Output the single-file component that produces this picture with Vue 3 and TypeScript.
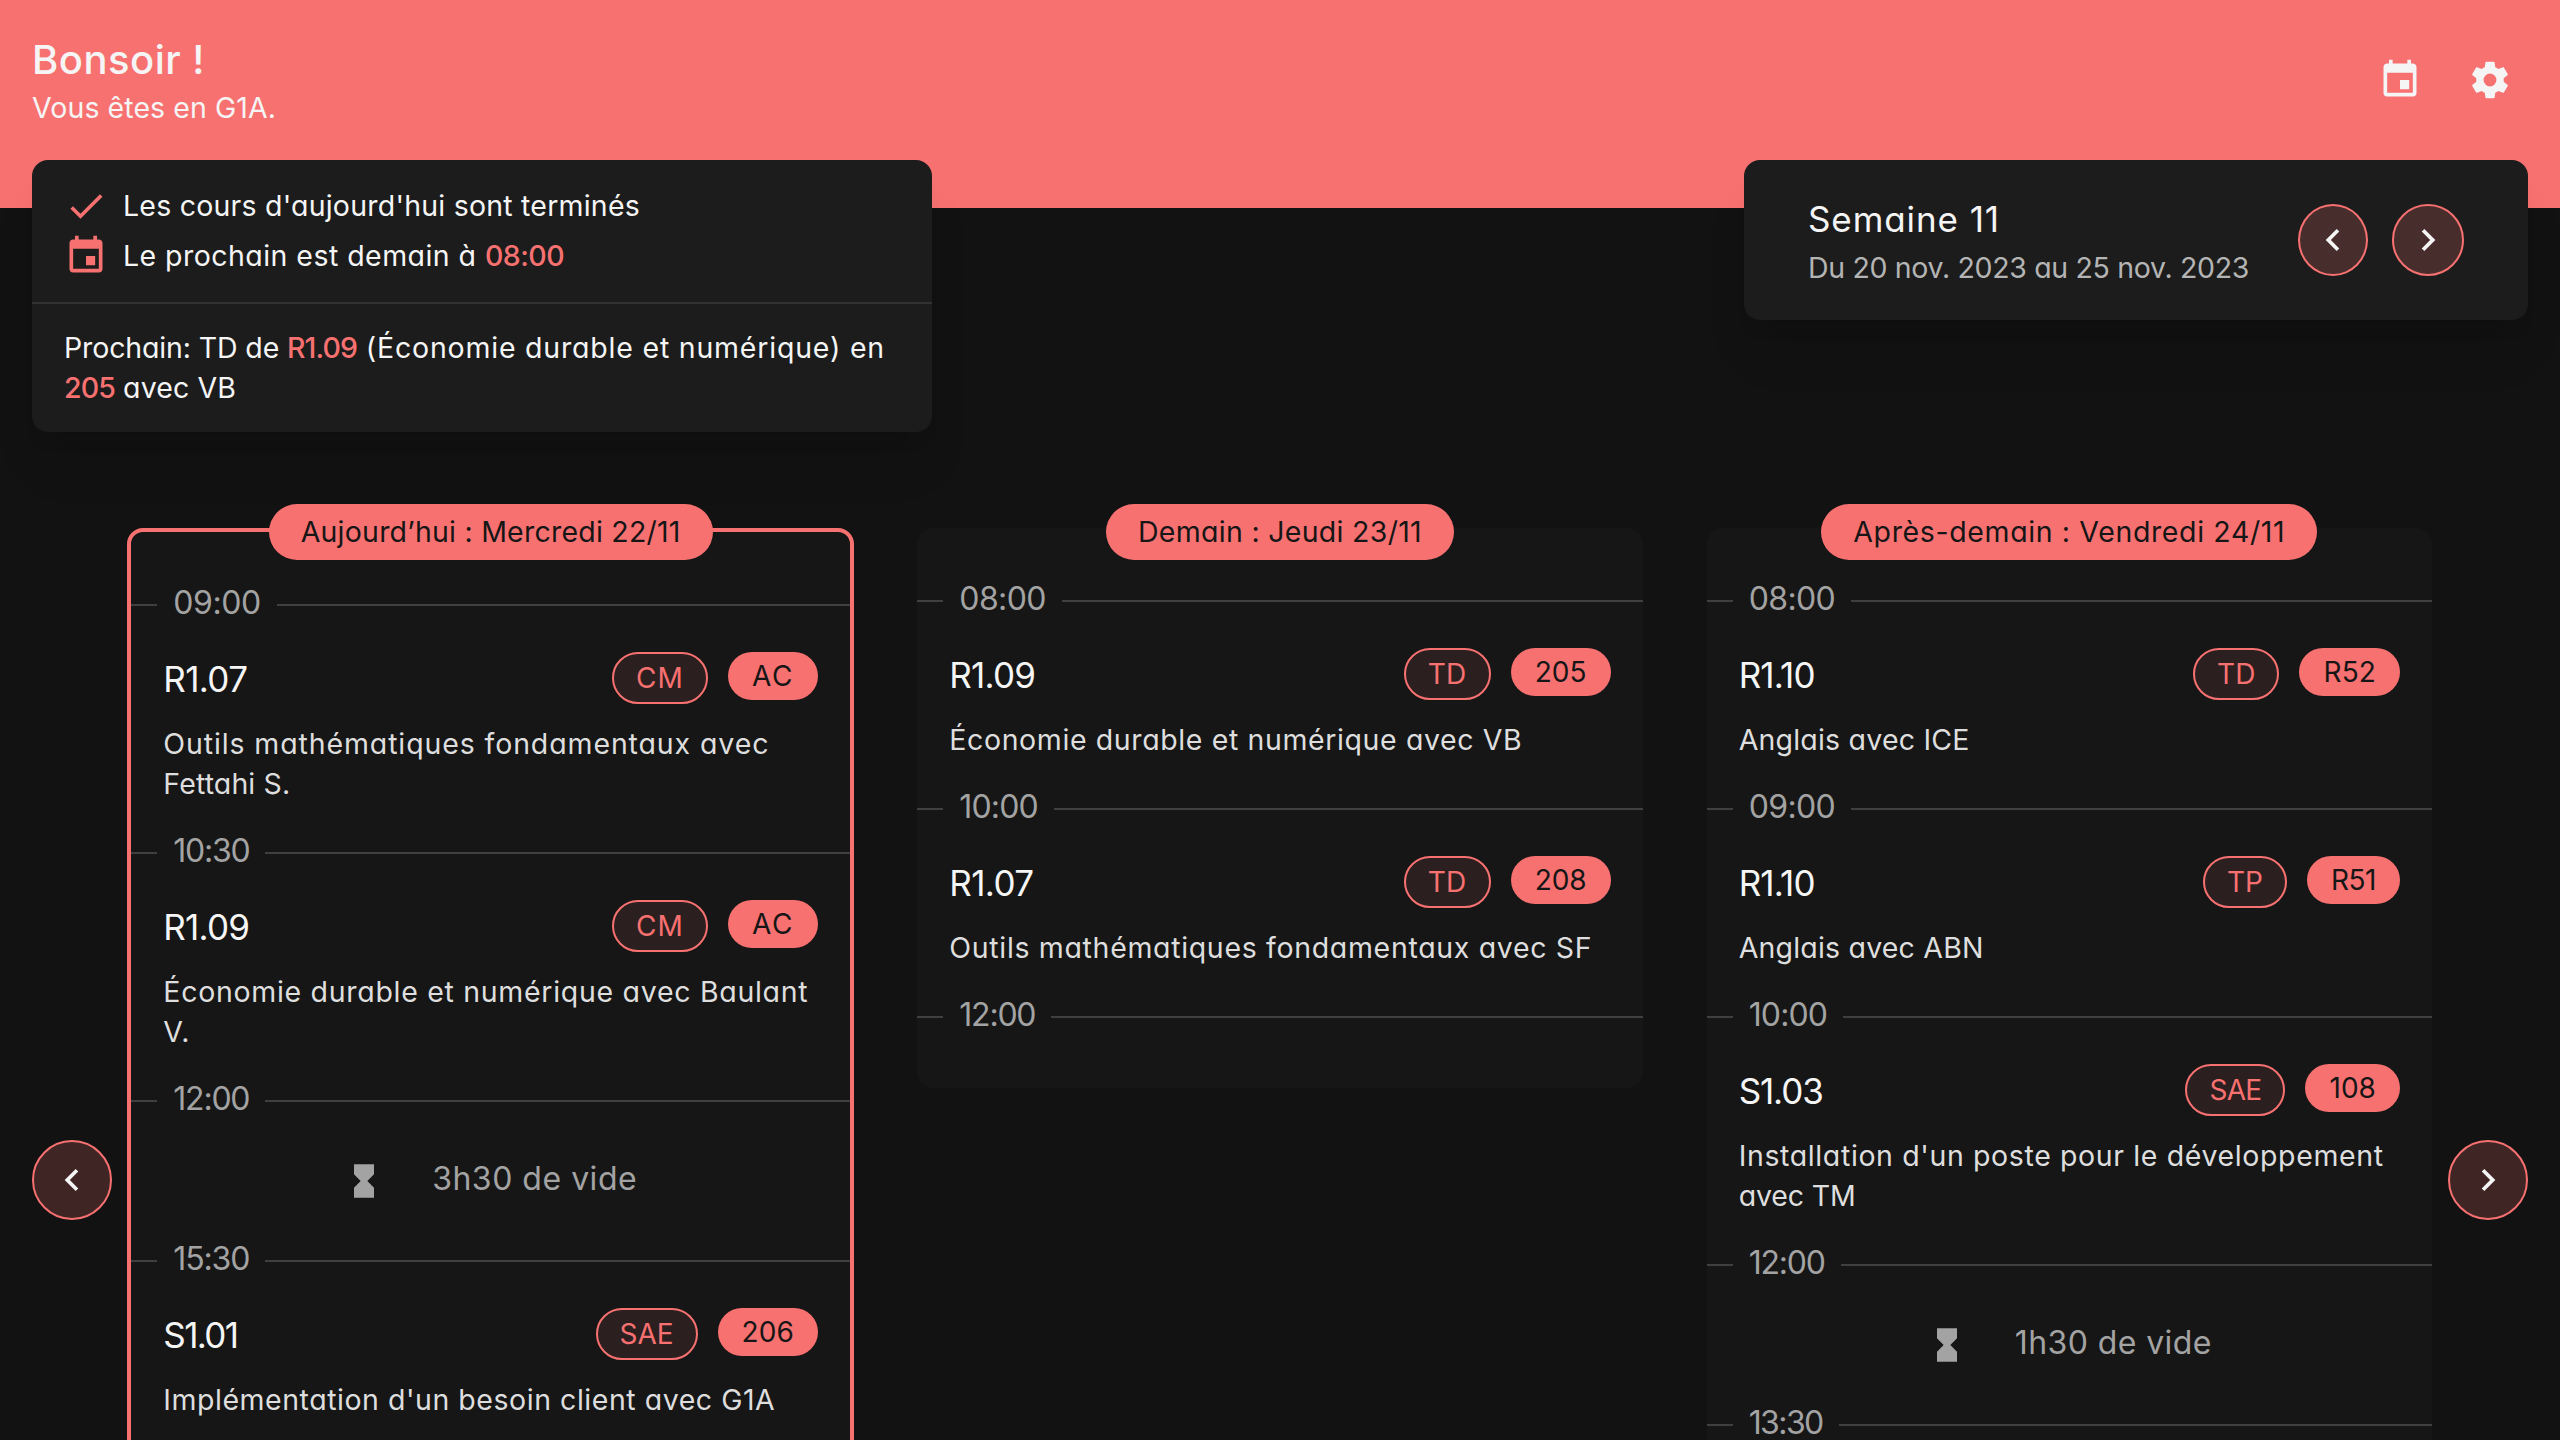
<script setup lang="ts">
import type { Directive } from 'vue'

interface Label {
  text: string
  width: number
}
interface Course {
  kind: 'course'
  code: Label
  type: Label
  room: Label
  lines: Label[]
}
interface Time {
  kind: 'time'
  label: Label
}
interface Pause {
  kind: 'pause'
  label: Label
}
interface Day {
  title: Label
  today: boolean
  items: (Course | Time | Pause)[]
}

const l = (text: string, width: number): Label => ({ text, width })
const time = (text: string, width: number): Time => ({ kind: 'time', label: l(text, width) })
const pause = (text: string, width: number): Pause => ({ kind: 'pause', label: l(text, width) })
const course = (code: Label, type: Label, room: Label, ...lines: Label[]): Course => ({
  kind: 'course', code, type, room, lines,
})

// Tracks a label out (or in) so that it occupies the requested width.
const vTrack: Directive<HTMLElement, number> = {
  mounted(el, { value }) {
    const natural = el.getBoundingClientRect().width
    const count = (el.textContent ?? '').length
    if (count > 0) el.style.letterSpacing = `${(value - natural) / count}px`
  },
}

const days: Day[] = [
  {
    title: l('Aujourd’hui : Mercredi 22/11', 380),
    today: true,
    items: [
      time('09:00', 87.5),
      course(l('R1.07', 84), l('CM', 48), l('AC', 42),
        l('Outils mathématiques fondamentaux avec', 606), l('Fettahi S.', 127)),
      time('10:30', 76),
      course(l('R1.09', 86), l('CM', 48), l('AC', 42),
        l('Économie durable et numérique avec Baulant', 645), l('V.', 27)),
      time('12:00', 76),
      pause('3h30 de vide', 205),
      time('15:30', 76),
      course(l('S1.01', 74), l('SAE', 54), l('206', 52.5),
        l("Implémentation d'un besoin client avec G1A", 612)),
    ],
  },
  {
    title: l('Demain : Jeudi 23/11', 284),
    today: false,
    items: [
      time('08:00', 86.5),
      course(l('R1.09', 86), l('TD', 39), l('205', 52),
        l('Économie durable et numérique avec VB', 573)),
      time('10:00', 78.5),
      course(l('R1.07', 84), l('TD', 39), l('208', 52),
        l('Outils mathématiques fondamentaux avec SF', 643)),
      time('12:00', 76),
    ],
  },
  {
    title: l('Après-demain : Vendredi 24/11', 432),
    today: false,
    items: [
      time('08:00', 86.5),
      course(l('R1.10', 76), l('TD', 38.5), l('R52', 52.5), l('Anglais avec ICE', 231)),
      time('09:00', 86.5),
      course(l('R1.10', 76), l('TP', 36), l('R51', 45), l('Anglais avec ABN', 245)),
      time('10:00', 78.5),
      course(l('S1.03', 84), l('SAE', 52), l('108', 46.5),
        l("Installation d'un poste pour le développement", 645), l('avec TM', 117)),
      time('12:00', 76),
      pause('1h30 de vide', 197),
      time('13:30', 74),
    ],
  },
]

const calendarPath =
  'M19,19H5V8H19M16,1V3H8V1H6V3H5C3.89,3 3,3.89 3,5V19A2,2 0 0,0 5,21H19A2,2 0 0,0 21,19V5C21,3.89 20.1,3 19,3H18V1M17,12H12V17H17V12Z'
const gearPath =
  'M12,15.5A3.5,3.5 0 0,1 8.5,12A3.5,3.5 0 0,1 12,8.5A3.5,3.5 0 0,1 15.5,12A3.5,3.5 0 0,1 12,15.5M19.43,12.97C19.47,12.65 19.5,12.33 19.5,12C19.5,11.67 19.47,11.34 19.43,11L21.54,9.37C21.73,9.22 21.78,8.95 21.66,8.73L19.66,5.27C19.54,5.05 19.27,4.96 19.05,5.05L16.56,6.05C16.04,5.66 15.5,5.32 14.87,5.07L14.5,2.42C14.46,2.18 14.25,2 14,2H10C9.75,2 9.54,2.18 9.5,2.42L9.13,5.07C8.5,5.32 7.96,5.66 7.44,6.05L4.95,5.05C4.73,4.96 4.46,5.05 4.34,5.27L2.34,8.73C2.21,8.95 2.27,9.22 2.46,9.37L4.57,11C4.53,11.34 4.5,11.67 4.5,12C4.5,12.33 4.53,12.65 4.57,12.97L2.46,14.63C2.27,14.78 2.21,15.05 2.34,15.27L4.34,18.73C4.46,18.95 4.73,19.03 4.95,18.95L7.44,17.94C7.96,18.34 8.5,18.68 9.13,18.93L9.5,21.58C9.54,21.82 9.75,22 10,22H14C14.25,22 14.46,21.82 14.5,21.58L14.87,18.93C15.5,18.67 16.04,18.34 16.56,17.94L19.05,18.95C19.27,19.03 19.54,18.95 19.66,18.73L21.66,15.27C21.78,15.05 21.73,14.78 21.54,14.63L19.43,12.97Z'
const checkPath = 'M21,7L9,19L3.5,13.5L4.91,12.09L9,16.17L19.59,5.59L21,7Z'
const leftPath = 'M15.41,16.58L10.83,12L15.41,7.41L14,6L8,12L14,18L15.41,16.58Z'
const rightPath = 'M8.59,16.58L13.17,12L8.59,7.41L10,6L16,12L10,18L8.59,16.58Z'
const hourglassPath = 'M6,2V8H6L10,12L6,16H6V22H18V16H18L14,12L18,8H18V2H6Z'
</script>

<template>
  <div class="page">
    <header class="header">
      <div>
        <h1 class="hello"><span v-track="173">Bonsoir !</span></h1>
        <p class="group"><span v-track="244">Vous êtes en G1A.</span></p>
      </div>
      <nav class="actions">
        <svg class="icon" viewBox="0 0 24 24"><path :d="calendarPath" /></svg>
        <svg class="icon" viewBox="0 0 24 24"><path :d="gearPath" /></svg>
      </nav>
    </header>

    <section class="cards">
      <article class="card status">
        <div class="summary">
          <div class="fact">
            <svg class="icon accent" viewBox="0 0 24 24"><path :d="checkPath" /></svg>
            <p><span v-track="517">Les cours d'aujourd'hui sont terminés</span></p>
          </div>
          <div class="fact">
            <svg class="icon accent" viewBox="0 0 24 24"><path :d="calendarPath" /></svg>
            <p><span v-track="362">Le prochain est demain à </span><span v-track="79" class="accent strong">08:00</span></p>
          </div>
        </div>
        <div class="next">
          <p><span v-track="223">Prochain: TD de </span><span v-track="70" class="accent strong">R1.09</span><span v-track="528"> (Économie durable et numérique) en</span></p>
          <p><span v-track="51" class="accent strong">205</span><span v-track="121"> avec VB</span></p>
        </div>
      </article>

      <article class="card week">
        <div class="week-text">
          <h2><span v-track="192">Semaine 11</span></h2>
          <p><span v-track="441">Du 20 nov. 2023 au 25 nov. 2023</span></p>
        </div>
        <div class="week-nav">
          <button class="round narrow"><svg viewBox="0 0 24 24"><path :d="leftPath" /></svg></button>
          <button class="round"><svg viewBox="0 0 24 24"><path :d="rightPath" /></svg></button>
        </div>
      </article>
    </section>

    <main class="timetable">
      <button class="round large"><svg viewBox="0 0 24 24"><path :d="leftPath" /></svg></button>
      <div class="days">
        <section v-for="day in days" :key="day.title.text" class="day">
          <h3 class="day-title"><span v-track="day.title.width">{{ day.title.text }}</span></h3>
          <div class="panel" :class="{ today: day.today }">
            <template v-for="(item, i) in day.items" :key="i">
              <div v-if="item.kind === 'time'" class="time">
                <span class="time-text"><span v-track="item.label.width">{{ item.label.text }}</span></span>
              </div>
              <div v-else-if="item.kind === 'pause'" class="pause">
                <svg viewBox="0 0 24 24"><path :d="hourglassPath" /></svg>
                <span v-track="item.label.width">{{ item.label.text }}</span>
              </div>
              <div v-else class="course">
                <div class="course-head">
                  <h4><span v-track="item.code.width">{{ item.code.text }}</span></h4>
                  <div class="badges">
                    <span class="badge outlined"><span v-track="item.type.width">{{ item.type.text }}</span></span>
                    <span class="badge"><span v-track="item.room.width">{{ item.room.text }}</span></span>
                  </div>
                </div>
                <p v-for="line in item.lines" :key="line.text"><span v-track="line.width">{{ line.text }}</span></p>
              </div>
            </template>
          </div>
        </section>
      </div>
      <button class="round large"><svg viewBox="0 0 24 24"><path :d="rightPath" /></svg></button>
    </main>
  </div>
</template>

<style>
body {
  margin: 0;
  background: #121212;
}
</style>

<style scoped>
.page {
  height: 1440px;
  overflow: hidden;
  background: #121212;
  color: #f5f5f5;
  font-family: Inter, "Open Sans", sans-serif;
  font-feature-settings: "cv11";
  font-size: 28.5px;
  line-height: 40px;
}
h1, h2, h3, h4, p {
  margin: 0;
  font-weight: 400;
  white-space: pre;
}
span {
  white-space: pre;
}
.header {
  box-sizing: border-box;
  height: 208px;
  padding: 32px 48px 80px 32px;
  background: #f87171;
  display: flex;
  justify-content: space-between;
  align-items: center;
}
.hello {
  font-size: 40px;
  line-height: 56px;
  font-weight: 500;
}
.actions {
  display: flex;
  gap: 46px;
}
.icon {
  width: 44px;
  height: 44px;
  flex: none;
  fill: currentColor;
  display: block;
}
.accent {
  color: #f87171;
}
.strong {
  font-weight: 500;
}
.cards {
  margin-top: -48px;
  padding: 0 32px;
  height: 368px;
  display: flex;
  justify-content: space-between;
  align-items: flex-start;
}
.card {
  border-radius: 16px;
  background: #1c1c1c;
  box-shadow: 0 40px 50px -10px rgba(0, 0, 0, 0.1), 0 16px 20px -12px rgba(0, 0, 0, 0.1);
}
.status {
  width: 900px;
}
.summary {
  padding: 24px 32px;
  border-bottom: 2px solid #323232;
  display: flex;
  flex-direction: column;
  gap: 6px;
}
.fact {
  display: flex;
  align-items: center;
  gap: 15px;
}
.next {
  padding: 24px 32px;
}
.week {
  box-sizing: border-box;
  width: 784px;
  height: 160px;
  padding: 0 64px;
  display: flex;
  align-items: center;
  justify-content: space-between;
}
.week-text h2 {
  font-size: 35px;
  line-height: 54px;
  padding-bottom: 2px;
}
.week-text p {
  color: #b4b4b4;
}
.week-nav {
  display: flex;
  gap: 24px;
}
.round {
  box-sizing: border-box;
  width: 72px;
  height: 72px;
  flex: none;
  padding: 0;
  border: 2px solid #f87171;
  border-radius: 50%;
  background: rgba(248, 113, 113, 0.2);
  color: #f5f5f5;
  display: flex;
  align-items: center;
  justify-content: center;
}
.round svg {
  width: 44px;
  height: 44px;
  flex: none;
  fill: currentColor;
}
.narrow {
  width: 70px;
}
.large {
  width: 80px;
  height: 80px;
  margin-top: 612px;
}
.timetable {
  padding: 0 32px;
  display: flex;
  align-items: flex-start;
  gap: 16px;
}
.days {
  flex: 1;
  display: grid;
  grid-template-columns: repeat(3, minmax(0, 1fr));
  gap: 64px;
  align-items: start;
}
.day {
  position: relative;
}
.day-title {
  position: absolute;
  top: -24px;
  left: 50%;
  transform: translateX(-50%);
  padding: 8px 32px;
  border-radius: 28px;
  background: #f87171;
  color: #161616;
  font-size: 28.5px;
}
.panel {
  padding: 48px 0;
  border-radius: 16px;
  background: #161616;
}
.today {
  margin: 0 -0.7px;
  border: 4px solid #f87171;
}
.time {
  height: 48px;
  display: flex;
  align-items: center;
  color: #a3a3a3;
  font-size: 32px;
  line-height: 44px;
}
.time::before,
.time::after {
  content: "";
  height: 2px;
  margin-top: 2px;
  background: #404040;
}
.time::before {
  width: 26px;
}
.time::after {
  flex: 1;
}
.time-text {
  padding: 0 16px 2px;
}
.pause {
  height: 112px;
  display: flex;
  align-items: center;
  justify-content: center;
  gap: 48px;
  color: #a3a3a3;
  font-size: 32px;
}
.pause span {
  padding-bottom: 2px;
}
.pause svg {
  width: 40px;
  height: 40px;
  margin-top: 2px;
  fill: currentColor;
}
.course {
  padding: 24px 32px;
}
.course-head {
  height: 56px;
  margin-bottom: 16px;
  display: flex;
  justify-content: space-between;
  align-items: flex-start;
}
.course-head h4 {
  font-size: 35px;
  line-height: 54px;
}
.course p {
  color: #dedede;
}
.badges {
  display: flex;
  align-items: flex-start;
  gap: 20px;
}
.badge {
  padding: 4px 24px;
  border-radius: 26px;
  background: #f87171;
  color: #161616;
  font-size: 28px;
}
.outlined {
  padding: 4px 22px;
  border: 2px solid #f87171;
  background: rgba(248, 113, 113, 0.1);
  color: #f87171;
}
</style>
